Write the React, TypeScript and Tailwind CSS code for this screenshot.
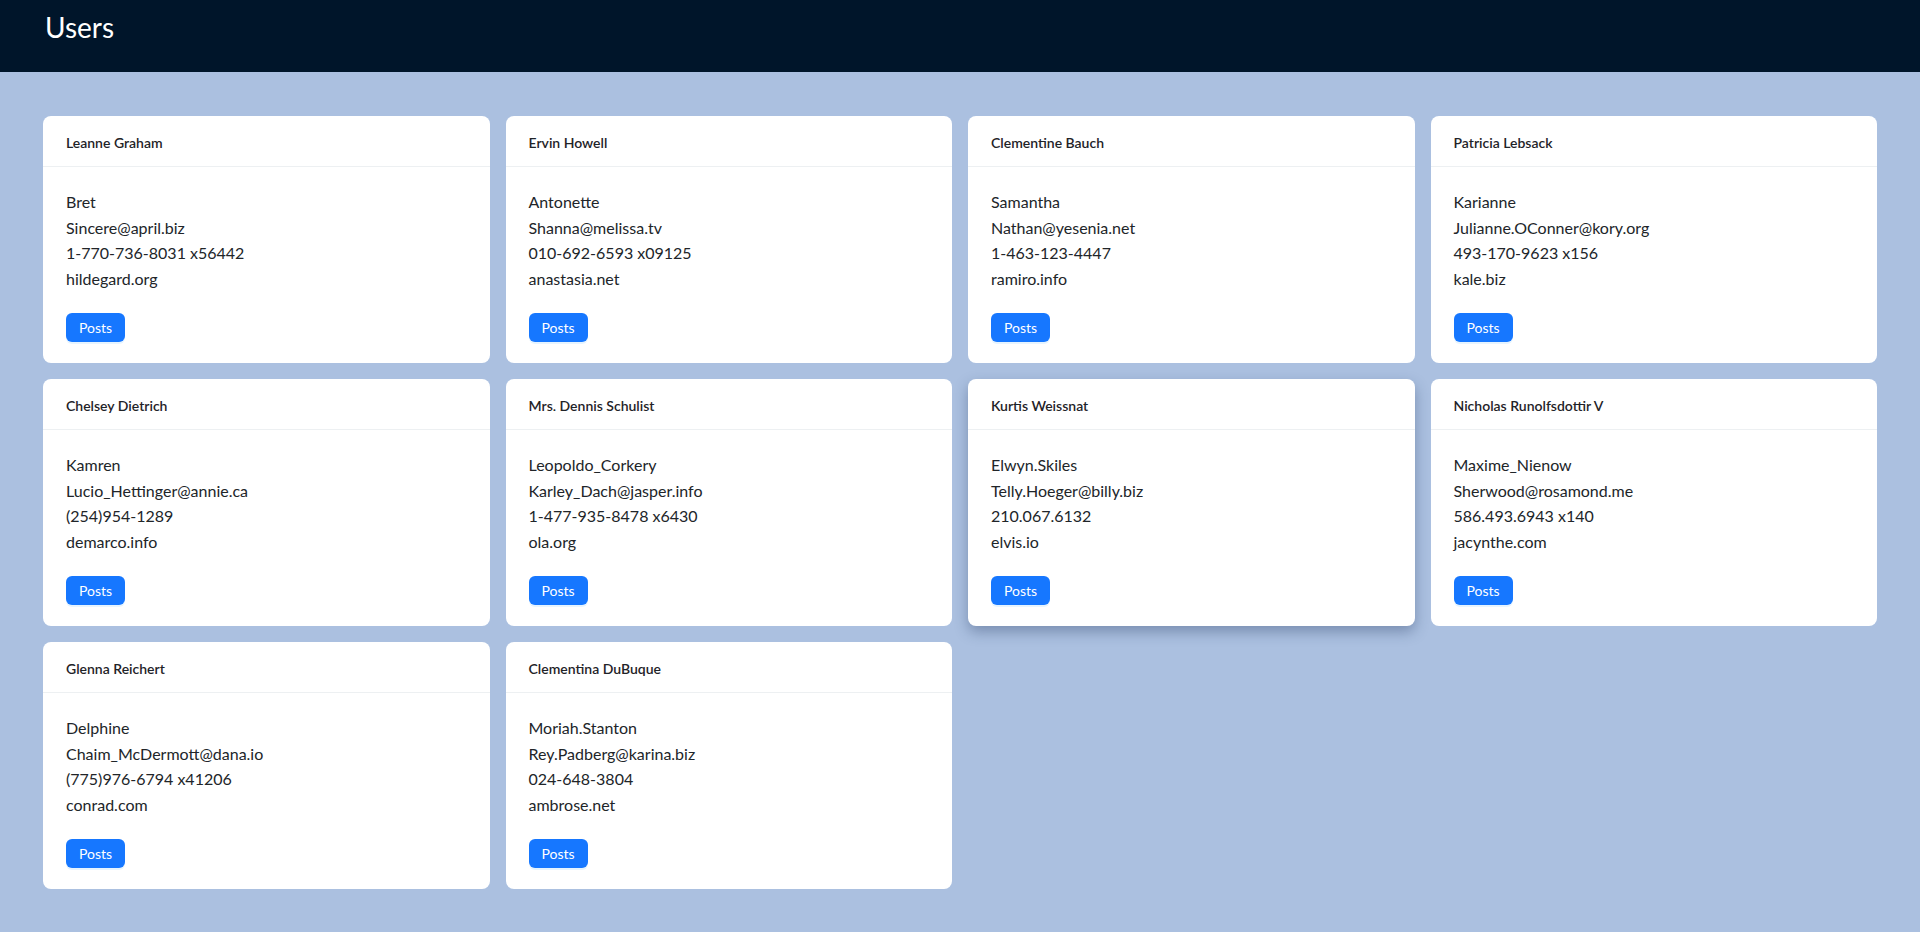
const users = [
  { name: "Leanne Graham", username: "Bret", email: "Sincere@april.biz", phone: "1-770-736-8031 x56442", website: "hildegard.org" },
  { name: "Ervin Howell", username: "Antonette", email: "Shanna@melissa.tv", phone: "010-692-6593 x09125", website: "anastasia.net" },
  { name: "Clementine Bauch", username: "Samantha", email: "Nathan@yesenia.net", phone: "1-463-123-4447", website: "ramiro.info" },
  { name: "Patricia Lebsack", username: "Karianne", email: "Julianne.OConner@kory.org", phone: "493-170-9623 x156", website: "kale.biz" },
  { name: "Chelsey Dietrich", username: "Kamren", email: "Lucio_Hettinger@annie.ca", phone: "(254)954-1289", website: "demarco.info" },
  { name: "Mrs. Dennis Schulist", username: "Leopoldo_Corkery", email: "Karley_Dach@jasper.info", phone: "1-477-935-8478 x6430", website: "ola.org" },
  { name: "Kurtis Weissnat", username: "Elwyn.Skiles", email: "Telly.Hoeger@billy.biz", phone: "210.067.6132", website: "elvis.io" },
  { name: "Nicholas Runolfsdottir V", username: "Maxime_Nienow", email: "Sherwood@rosamond.me", phone: "586.493.6943 x140", website: "jacynthe.com" },
  { name: "Glenna Reichert", username: "Delphine", email: "Chaim_McDermott@dana.io", phone: "(775)976-6794 x41206", website: "conrad.com" },
  { name: "Clementina DuBuque", username: "Moriah.Stanton", email: "Rey.Padberg@karina.biz", phone: "024-648-3804", website: "ambrose.net" },
];

type User = (typeof users)[number];

const UserCard = ({ user, hovered }: { user: User; hovered?: boolean }) => {
  return (
    <div
      className={
        hovered
          ? "flex h-[247px] flex-col rounded-lg bg-white shadow-[0_6px_14px_rgba(30,50,90,0.35)]"
          : "flex h-[247px] flex-col rounded-lg bg-white"
      }
    >
      <div className="flex h-[51px] items-center border-b border-[#edf0f2] px-[23px] pt-[2px]">
        <h3 className="text-[14px] font-semibold text-[#1f2328]">{user.name}</h3>
      </div>
      <div className="flex flex-col px-[23px] pt-[22px]">
        <div className="text-[16px] leading-[25.5px] text-[#212529]">
          <p>{user.username}</p>
          <p>{user.email}</p>
          <p>{user.phone}</p>
          <p>{user.website}</p>
        </div>
        <div className="mt-[22px]">
          <button className="h-[29px] rounded-md bg-[#1677ff] px-[13px] text-[14px] text-white shadow-[0_2px_0_rgba(5,145,255,0.1)]">
            Posts
          </button>
        </div>
      </div>
    </div>
  );
};

export default function App() {
  return (
    <div className="min-h-[932px] bg-[#abc0e0] font-['Lato',sans-serif]">
      <header className="flex h-[72px] items-start bg-[#00152a] px-[45px] pt-[7px]">
        <h1 className="text-[28px] leading-[40px] text-white">Users</h1>
      </header>
      <main className="grid grid-cols-4 gap-x-4 gap-y-4 px-[43px] pt-[44px] pb-[44px]">
        {users.map((u, i) => (
          <UserCard key={u.name} user={u} hovered={i === 6} />
        ))}
      </main>
    </div>
  );
}
